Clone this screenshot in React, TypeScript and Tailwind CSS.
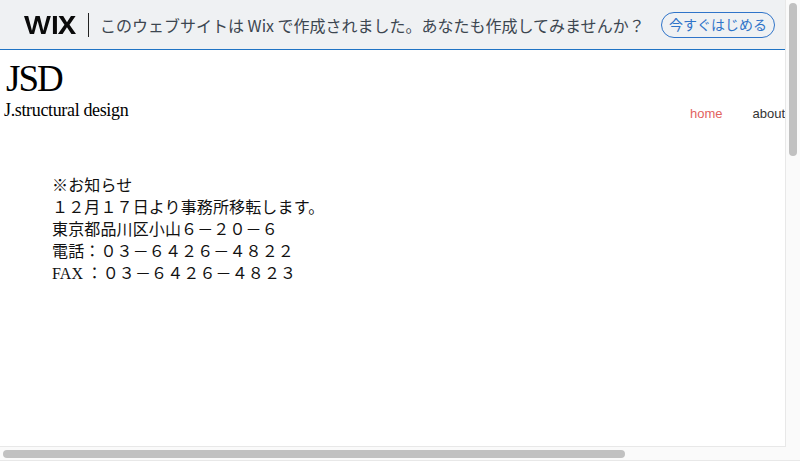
const NAV = ["home", "about"]

const NOTICE = [
  "※お知らせ",
  "１２月１７日より事務所移転します。",
  "東京都品川区小山６－２０－６",
  "電話：０３－６４２６－４８２２",
  "FAX\u2009：０３－６４２６－４８２３",
]

function WixLogo() {
  return (
    <svg width="52" height="18" viewBox="0 0 49.6 17" preserveAspectRatio="none" className="shrink-0" fill="#0a0a0a">
      <polygon points="0,0 4,0 7.6,14 11,0 15,0 18.4,14 22,0 25.6,0 20.4,17 16.4,17 13,4.5 9.6,17 5.6,17" />
      <rect x="27.6" y="0" width="3.8" height="17" />
      <polygon points="33,0 37.4,0 41,6 44.8,0 49.2,0 43.4,8.3 49.6,17 45.2,17 41,10.7 36.8,17 32.4,17 38.6,8.3" />
    </svg>
  )
}

export default function App() {
  return (
    <div className="w-[800px] h-[461px] overflow-hidden flex flex-col bg-[#fafafa]">
      <div className="flex flex-1 min-h-0">
        <div className="w-[786px] shrink-0 bg-white border-r border-b border-[#e8e8e8] overflow-hidden">
          {/* Wix banner */}
          <header className="h-[50px] bg-[#eff1f3] border-b border-[#1f73c4] flex items-center pl-[24px] pr-[10px] font-['Noto_Sans_CJK_JP',sans-serif]">
            <WixLogo />
            <div className="w-px h-[24px] bg-[#222] ml-[12px] mr-[11px] shrink-0" />
            <p className="text-[16px] text-[#3c4650] whitespace-nowrap">
              このウェブサイトは Wix で作成されました。あなたも作成してみませんか？
            </p>
            <button className="ml-auto h-[26px] w-[114px] rounded-full border border-[#2f74c9] text-[#2f74c9] text-[14px] whitespace-nowrap flex items-center justify-center">
              今すぐはじめる
            </button>
          </header>

          {/* Site header */}
          <div className="h-[95px] flex justify-between">
            <div className="font-['Liberation_Serif',serif] text-black pl-[4px]">
              <h1 className="text-[37px] leading-[44px] pt-[7px] pl-[2px] tracking-[-2px]">JSD</h1>
              <p className="text-[18px] leading-[20px] tracking-[-0.35px] -mt-[1px]">J.structural design</p>
            </div>
            <nav className="flex gap-[30px] w-[95px] shrink-0 pt-[55px] text-[13px] leading-[18px] font-['Liberation_Sans',sans-serif] font-light whitespace-nowrap">
              {NAV.map((item) => (
                <span key={item} className={item === "home" ? "text-[#e2635f]" : "text-[#333]"}>
                  {item}
                </span>
              ))}
            </nav>
          </div>

          {/* Notice */}
          <main className="pt-[30px] pl-[52px] text-[16px] leading-[22px] tracking-[0.13px] text-[#111] font-['Liberation_Serif','Noto_Sans_CJK_JP',serif]">
            {NOTICE.map((line) => (
              <p key={line} className="whitespace-nowrap">{line}</p>
            ))}
          </main>
        </div>

        {/* Vertical scrollbar */}
        <div className="w-[14px] shrink-0 pt-[3px] pl-[3px]">
          <div className="w-[8px] h-[153px] rounded-full bg-[#c1c1c1]" />
        </div>
      </div>

      {/* Horizontal scrollbar */}
      <div className="h-[14px] shrink-0 pt-[3px] pl-[3px] border-b border-[#e8e8e8]">
        <div className="w-[622px] h-[8px] rounded-full bg-[#c1c1c1]" />
      </div>
    </div>
  )
}
